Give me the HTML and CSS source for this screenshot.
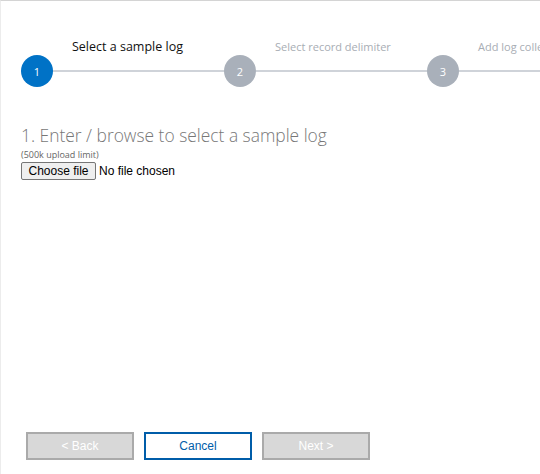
FILE: index.html
```html
<!DOCTYPE html>
<html>
<head>
<meta charset="utf-8">
<link rel="stylesheet" href="styles.css">
</head>
<body>
<div class="frame">
  <div class="main">
    <div class="stepper">
      <div class="step active">
        <div class="step-label">Select a sample log</div>
        <div class="step-track"><div class="circle">1</div><div class="line"></div></div>
      </div>
      <div class="step">
        <div class="step-label">Select record delimiter</div>
        <div class="step-track"><div class="circle">2</div><div class="line"></div></div>
      </div>
      <div class="step">
        <div class="step-label">Add log collection paths</div>
        <div class="step-track"><div class="circle">3</div><div class="line"></div></div>
      </div>
    </div>
    <div class="content">
      <h1 class="title">1. Enter / browse to select a sample log</h1>
      <div class="hint">(500k upload limit)</div>
      <label class="file">
        <input class="file-input" type="file">
        <span class="file-btn">Choose file</span>
        <span class="file-name">No file chosen</span>
      </label>
    </div>
  </div>
  <div class="footer">
    <button class="btn btn-disabled">&lt; Back</button>
    <button class="btn btn-primary">Cancel</button>
    <button class="btn btn-disabled">Next &gt;</button>
  </div>
</div>
</body>
</html>
```
FILE: styles.css
```css
html, body {
  margin: 0;
  padding: 0;
  background: #fff;
}
body {
  font-family: "Open Sans", "Noto Sans", sans-serif;
  overflow: hidden;
}
.frame {
  width: 540px;
  height: 474px;
  box-sizing: border-box;
  border-top: 1px solid #d4d4d4;
  border-left: 1px solid #ececec;
  display: flex;
  flex-direction: column;
  overflow: hidden;
}
.main {
  flex: 1;
}
.stepper {
  display: flex;
  margin-top: 38px;
  padding-left: 20px;
  overflow: hidden;
}
.step {
  width: 203px;
  flex-shrink: 0;
  display: flex;
  flex-direction: column;
}
.step-label {
  margin-left: 51px;
  height: 16px;
  line-height: 16px;
  font-size: 11px;
  color: #a8adb4;
  white-space: nowrap;
}
.step.active .step-label {
  color: #111;
  font-size: 12.5px;
}
.step-track {
  display: flex;
  align-items: center;
  height: 32px;
}
.circle {
  width: 32px;
  height: 32px;
  border-radius: 50%;
  background: #a9b0ba;
  color: #fff;
  font-size: 11px;
  display: flex;
  align-items: center;
  justify-content: center;
  flex-shrink: 0;
}
.step.active .circle {
  background: #0072c6;
}
.line {
  flex: 1;
  height: 2px;
  background: #cfd3d9;
}
.content {
  padding-left: 20px;
  margin-top: 37px;
}
.title {
  margin: 0;
  font-weight: 300;
  font-size: 17.4px;
  line-height: 22px;
  color: #777;
}
.hint {
  font-size: 9px;
  line-height: 11px;
  color: #666;
  margin-top: 3px;
}
.file {
  display: flex;
  align-items: center;
  margin-top: 2px;
  font-family: "Liberation Sans", Arial, sans-serif;
  font-size: 12px;
  color: #000;
}
.file-input {
  display: none;
}
.file-btn {
  box-sizing: border-box;
  height: 18px;
  width: 75px;
  display: flex;
  align-items: center;
  justify-content: center;
  background: #efefef;
  border: 1px solid #767676;
  border-radius: 2px;
  font-size: 12px;
}
.file-name {
  margin-left: 3px;
}
.footer {
  display: flex;
  gap: 10px;
  padding: 0 0 14px 25px;
}
.btn {
  width: 108px;
  height: 28px;
  box-sizing: border-box;
  font-family: "Liberation Sans", Arial, sans-serif;
  font-size: 12px;
  border: 2px solid #aaa;
  background: #d8d8d8;
  color: #fff;
  padding: 0;
}
.btn-primary {
  background: #fff;
  border-color: #005da9;
  color: #005da9;
}
```
